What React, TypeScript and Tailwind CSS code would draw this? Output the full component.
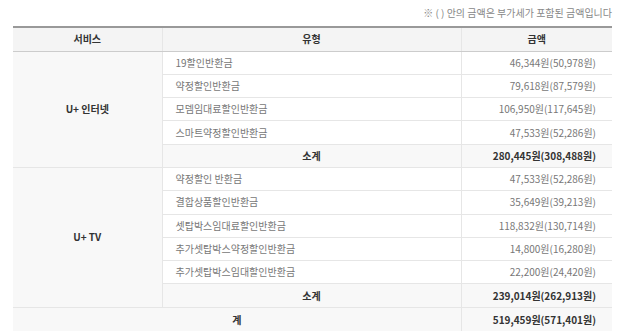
import React from "react"

type Item = { name: string; amount: string }

const internet: Item[] = [
  { name: "19할인반환금", amount: "46,344원(50,978원)" },
  { name: "약정할인반환금", amount: "79,618원(87,579원)" },
  { name: "모뎀임대료할인반환금", amount: "106,950원(117,645원)" },
  { name: "스마트약정할인반환금", amount: "47,533원(52,286원)" },
]

const tv: Item[] = [
  { name: "약정할인 반환금", amount: "47,533원(52,286원)" },
  { name: "결합상품할인반환금", amount: "35,649원(39,213원)" },
  { name: "셋탑박스임대료할인반환금", amount: "118,832원(130,714원)" },
  { name: "추가셋탑박스약정할인반환금", amount: "14,800원(16,280원)" },
  { name: "추가셋탑박스임대할인반환금", amount: "22,200원(24,420원)" },
]

const cell = "border border-[#e6e6e6] h-[23.3px] p-0"

function Group({ label, items, subtotal }: { label: string; items: Item[]; subtotal: string }) {
  return (
    <>
      {items.map((it, i) => (
        <tr key={it.name}>
          {i === 0 && (
            <td rowSpan={items.length + 1} className={`${cell} border-l-0 bg-[#f8f8f8] text-center font-bold text-[#333]`}>
              {label}
            </td>
          )}
          <td className={`${cell} pl-[13px] text-left text-[#777]`}>{it.name}</td>
          <td className={`${cell} border-r-0 pr-[16px] text-right text-[#777]`}>{it.amount}</td>
        </tr>
      ))}
      <tr className="bg-[#f8f8f8]">
        <td className={`${cell} text-center font-bold text-[#333]`}>소계</td>
        <td className={`${cell} border-r-0 pr-[16px] text-right font-bold text-[#333]`}>{subtotal}</td>
      </tr>
    </>
  )
}

export default function App() {
  return (
    <div
      className="w-[620px] h-[331px] overflow-hidden bg-white text-[10px] leading-none"
      style={{ fontFamily: '"Noto Sans CJK KR", "Noto Sans", sans-serif' }}
    >
      <div className="pr-[8px] pt-[8px] pb-[8px] text-right text-[#888]">
        ※ ( ) 안의 금액은 부가세가 포함된 금액입니다
      </div>
      <div className="pl-[13px] pr-[8px]">
        <table className="w-full border-collapse border-t-2 border-t-[#999] table-fixed">
          <colgroup>
            <col className="w-[149px]" />
            <col className="w-[299px]" />
            <col />
          </colgroup>
          <thead>
            <tr className="bg-[#f4f4f4]">
              <th className="border-b border-b-[#ccc] border-r border-r-[#e6e6e6] h-[24px] text-center font-bold text-[#333]">서비스</th>
              <th className="border-b border-b-[#ccc] border-r border-r-[#e6e6e6] text-center font-bold text-[#333]">유형</th>
              <th className="border-b border-b-[#ccc] text-center font-bold text-[#333]">금액</th>
            </tr>
          </thead>
          <tbody>
            <Group label="U+ 인터넷" items={internet} subtotal="280,445원(308,488원)" />
            <Group label="U+ TV" items={tv} subtotal="239,014원(262,913원)" />
            <tr className="bg-[#f8f8f8]">
              <td colSpan={2} className={`${cell} border-l-0 h-[25px] text-center font-bold text-[#333]`}>계</td>
              <td className={`${cell} border-r-0 pr-[16px] text-right font-bold text-[#333]`}>519,459원(571,401원)</td>
            </tr>
          </tbody>
        </table>
      </div>
    </div>
  )
}
